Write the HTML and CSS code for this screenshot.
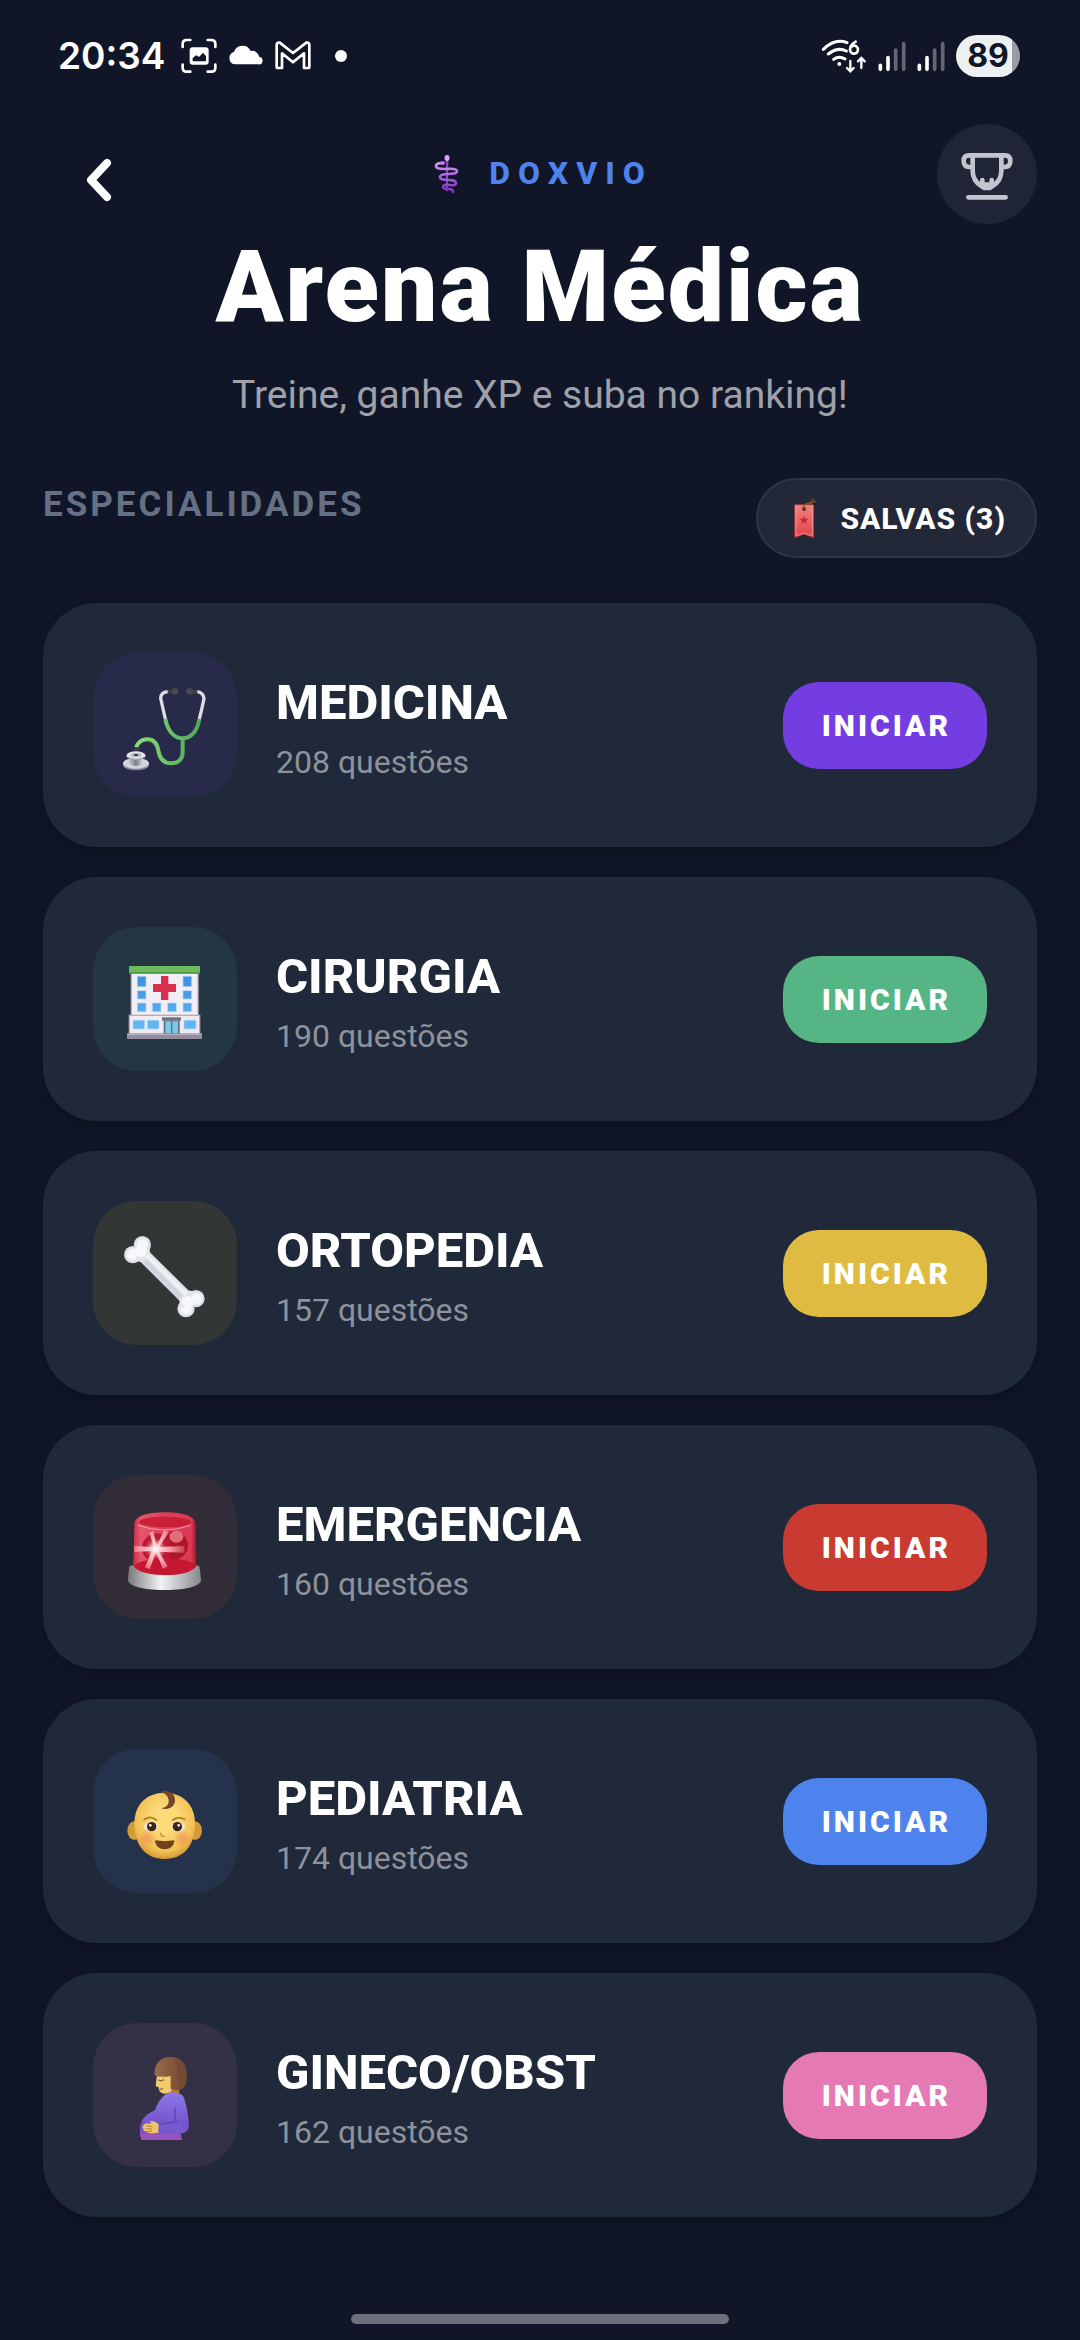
FILE: index.html
```html
<!DOCTYPE html>
<html lang="pt-BR">
	<head>
		<title>Arena Médica</title>
		<meta charset="UTF-8">
		<meta name="viewport" content="width=device-width, initial-scale=1">
		<link rel="stylesheet" href="styles.css">
	</head>
	<body>
		<div class="status-bar">
			<div class="status-left">
				<span class="clock">20:34</span>
				<svg class="status-icon" viewBox="421 55 108 108">
					<path d="M426 82v-9q0-12 12-12h11M501 61h11q12 0 12 12v9M524 135v9q0 12-12 12h-11M449 156h-11q-12 0-12-12v-9" fill="none" stroke="#fff" stroke-width="8" stroke-linecap="round"/>
					<rect x="447" y="83" width="57" height="52" rx="9" fill="#fff"/>
					<path d="M456 125v-10l11-8 8 5 12-13 9 11v15z" fill="#101628"/>
				</svg>
				<svg class="status-icon" viewBox="562 55 108 108">
					<path d="M582 134a19 19 0 0 1-2-37 27 27 0 0 1 50-3 22 22 0 0 1 26 18 11 11 0 0 1-3 22z" fill="#fff"/>
				</svg>
				<svg class="status-icon" viewBox="704 55 108 108">
					<path d="M709 77q0-10 9-8l40 31 40-31q9-2 9 8v64q0 4-4 4h-12V101l-33 27-33-27v44h-12q-4 0-4-4z" fill="none" stroke="#fff" stroke-width="8" stroke-linejoin="round"/>
				</svg>
				<span class="status-dot"></span>
			</div>
			<div class="status-right">
				<svg class="wifi-icon" viewBox="66 56 138 102">
					<g fill="none" stroke="#fff" stroke-width="9" stroke-linecap="round">
						<path d="M73 87q35-34 71-20M88 101q28-22 54-9M104 117q16-12 34-1"/>
						<path d="M170 64q-17 10-17 24a12 12 0 1 0 3-8" stroke-width="8"/>
						<path d="M154 122v30M144 143l10 10 10-10M187 143v-28M177 123l10-10 10 10" stroke-width="7"/>
					</g>
					<circle cx="121" cy="131" r="6" fill="#fff"/>
				</svg>
				<svg class="signal-icon" viewBox="229 61 84 93">
					<g stroke="#fff" stroke-width="11" stroke-linecap="round">
						<path d="M236 134v12M259 111v35"/>
						<path d="M282 88v58M306 69v77" opacity=".35"/>
					</g>
				</svg>
				<svg class="signal-icon" viewBox="229 61 84 93">
					<g stroke="#fff" stroke-width="11" stroke-linecap="round">
						<path d="M236 134v12M259 111v35"/>
						<path d="M282 88v58M306 69v77" opacity=".35"/>
					</g>
				</svg>
				<span class="battery">89</span>
			</div>
		</div>

		<header class="header">
			<button type="button" class="back" aria-label="Voltar">
				<svg viewBox="0 0 30 48"><path d="M23 7 7 24l16 17" fill="none" stroke="#fff" stroke-width="8" stroke-linecap="round" stroke-linejoin="round"/></svg>
			</button>
			<div class="heading">
				<p class="brand">
					<svg viewBox="0 0 40 40">
						<defs>
							<linearGradient id="brandGrad" x1="0" y1="0" x2="0" y2="1">
								<stop offset="0" stop-color="#d79af0"/>
								<stop offset=".5" stop-color="#a35fe0"/>
								<stop offset="1" stop-color="#7631b8"/>
							</linearGradient>
						</defs>
						<path d="M18.600 5h2.800l-.6 33h-1.600z" fill="#8c45c9"/>
						<ellipse cx="20" cy="5" rx="2.500" ry="3" fill="#dca4f2"/>
						<path d="M15 10q-6 0-6 3 0 3 8 3 13-1 13 2 0 3-8 3-9 0-9 3 0 3 8 3 8 0 8 3 0 3-6 2-7-1-7 2 0 2 6 2 4 0 4 3" fill="none" stroke="url(#brandGrad)" stroke-width="2.700" stroke-linecap="round"/>
						<path d="m12 11 3-3 3 1-1 3z" fill="#c684ea"/>
					</svg>
					<span>DOXVIO</span>
				</p>
				<h1>Arena Médica</h1>
				<p class="subtitle">Treine, ganhe XP e suba no ranking!</p>
			</div>
			<button type="button" class="trophy" aria-label="Ranking">
				<svg viewBox="891 42 300 300" fill="none" stroke="#c3c5ce" stroke-width="14" stroke-linecap="round" stroke-linejoin="round">
					<path d="M998 136h86v46c0 22-10 36-26 46l-8 6h-18l-8-6c-16-10-26-24-26-46z"/>
					<path d="M998 136h-11q-16 0-16 17t16 18h11M1084 136h11q16 0 16 17t-16 18h-11"/>
					<path d="M1027 210v14h28v-14M985 262h112"/>
				</svg>
			</button>
		</header>

		<main class="content">
			<div class="section-head">
				<h2>ESPECIALIDADES</h2>
				<button type="button" class="saved">
					<svg viewBox="456 1162 84 126">
						<defs>
							<linearGradient id="markGrad" x1="0" y1="0" x2="0" y2="1">
								<stop offset="0" stop-color="#f08480"/>
								<stop offset="1" stop-color="#df3f49"/>
							</linearGradient>
						</defs>
						<path d="M470 1188q0-3 3-3h51q3 0 3 3v96l-29-10-28 10z" fill="url(#markGrad)" stroke="#b62f3b" stroke-width="2"/>
						<path d="M474 1188v90l24-8 25 8v-90" fill="none" stroke="#ffaaa6" stroke-width="2"/>
						<path d="m498 1219 4 8 9 1-7 6 2 9-8-5-8 5 2-9-7-6 9-1z" fill="#c92843"/>
						<circle cx="498" cy="1198" r="6" fill="#53231d"/>
						<path d="M497 1200v-15q12-2 22-5 10-3 14-6M503 1183q18-2 23-16" fill="none" stroke="#845022" stroke-width="4"/>
					</svg>
					SALVAS (3)
				</button>
			</div>

			<ul class="cards">
				<li class="card medicina">
					<div class="tile">
						<svg viewBox="39 39 432 432">
							<defs>
								<linearGradient id="tubeGrad" x1="0" y1="0" x2="1" y2="0">
									<stop offset="0" stop-color="#8bdc75"/>
									<stop offset="1" stop-color="#4fa85a"/>
								</linearGradient>
								<linearGradient id="steelGrad" x1="0" y1="0" x2="1" y2="0">
									<stop offset="0" stop-color="#c5c8d0"/>
									<stop offset=".5" stop-color="#787c89"/>
									<stop offset="1" stop-color="#d9dce4"/>
								</linearGradient>
							</defs>
							<path d="M256 237c8 38 28 58 52 58s44-20 50-58M308 295v42c0 22-14 33-35 33-27 0-35-20-38-38-4-24-14-34-33-34-18 0-32 12-34 28" fill="none" stroke="url(#tubeGrad)" stroke-width="12"/>
							<path d="M256 237q-10-44-14-62 0-18 22-20M358 237q11-44 14-62-2-17-20-20" fill="none" stroke="#dcdde5" stroke-width="10"/>
							<path d="M263 155h12M339 155h12M168 321v12" stroke="#3d3d43" stroke-width="12"/>
							<circle cx="285" cy="154" r="10" fill="#4a4a50"/>
							<circle cx="329" cy="154" r="10" fill="#4a4a50"/>
							<ellipse cx="168" cy="374" rx="39" ry="17" fill="#8b8f9c"/>
							<ellipse cx="168" cy="370" rx="39" ry="16" fill="#d1d4dd"/>
							<path d="M147 350h42v21q-21 14-42 0z" fill="url(#steelGrad)"/>
							<ellipse cx="168" cy="348" rx="29" ry="12" fill="#a3a7b2"/>
							<ellipse cx="168" cy="345" rx="28" ry="11" fill="#e3e5eb"/>
							<ellipse cx="168" cy="345" rx="16" ry="6" fill="#b4b7c0"/>
							<ellipse cx="168" cy="345" rx="7" ry="3" fill="#36373d"/>
						</svg>
					</div>
					<div class="info">
						<h3>MEDICINA</h3>
						<p>208 questões</p>
					</div>
					<button type="button" class="start">INICIAR</button>
				</li>
				<li class="card cirurgia">
					<div class="tile">
						<svg viewBox="39 39 432 432">
							<defs>
								<linearGradient id="winGrad" x1="0" y1="0" x2="0" y2="1">
									<stop offset="0" stop-color="#3e8de0"/>
									<stop offset="1" stop-color="#63b9f4"/>
								</linearGradient>
							</defs>
							<rect x="154" y="172" width="200" height="136" fill="#f1eff5" stroke="#b9b3bf" stroke-width="4"/>
							<rect x="147" y="156" width="213" height="22" fill="#6cba5c"/>
							<path d="M147 175h213v4H147z" fill="#488f43"/>
							<rect x="148" y="304" width="211" height="56" fill="#eeebf2" stroke="#b1aab8" stroke-width="4"/>
							<rect x="141" y="359" width="225" height="16" fill="#928c9e"/>
							<path d="M141 359h225v4H141z" fill="#b5afbe"/>
							<path d="M243 186h22v24h23v24h-23v24h-22v-24h-24v-24h24z" fill="#d9304f"/>
							<path d="M172 187h26v31h-26zM309 187h26v31h-26zM172 230h26v25h-26zM309 230h26v25h-26zM172 267h26v26h-26zM217 267h26v26h-26zM263 267h26v26h-26zM309 267h26v26h-26zM159 319h35v26h-35zM202 319h35v26h-35zM312 319h36v26h-36z" fill="url(#winGrad)" stroke="#b9d9f3" stroke-width="2"/>
							<rect x="251" y="319" width="48" height="40" fill="#5f6c84"/>
							<path d="M256 322h17v36h-17zM277 322h17v36h-17z" fill="#79cbe6"/>
							<rect x="246" y="310" width="57" height="10" fill="#747083"/>
						</svg>
					</div>
					<div class="info">
						<h3>CIRURGIA</h3>
						<p>190 questões</p>
					</div>
					<button type="button" class="start">INICIAR</button>
				</li>
				<li class="card ortopedia">
					<div class="tile">
						<svg viewBox="39 39 432 432">
							<defs>
								<radialGradient id="knobGrad">
									<stop offset=".5" stop-color="#f7f8fb"/>
									<stop offset="1" stop-color="#d4d5de"/>
								</radialGradient>
							</defs>
							<g fill="url(#knobGrad)">
								<circle cx="187" cy="170" r="26"/>
								<circle cx="158" cy="200" r="26"/>
								<circle cx="348" cy="332" r="26"/>
								<circle cx="318" cy="362" r="26"/>
							</g>
							<path d="m180 180 31-3q-4 10 0 17l114 113q8 4 20 1l-27 52-20-4q4-13-2-21L182 222q-8-4-18 1z" fill="#e3e4eb"/>
							<path d="m187 225 110 110 13-13-110-110z" fill="#d3d4de"/>
							<path d="m196 207 118 118 9-9-118-118z" fill="#f0f1f5"/>
							<circle cx="182" cy="190" r="18" fill="#f7f8fb"/>
							<circle cx="324" cy="342" r="18" fill="#f7f8fb"/>
						</svg>
					</div>
					<div class="info">
						<h3>ORTOPEDIA</h3>
						<p>157 questões</p>
					</div>
					<button type="button" class="start">INICIAR</button>
				</li>
				<li class="card emergencia">
					<div class="tile">
						<svg viewBox="39 39 432 432">
							<defs>
								<linearGradient id="baseGrad" x1="0" y1="0" x2="1" y2="0">
									<stop offset="0" stop-color="#777a7d"/>
									<stop offset=".45" stop-color="#f2f3f4"/>
									<stop offset="1" stop-color="#85888b"/>
								</linearGradient>
								<linearGradient id="domeGrad" x1="0" y1="0" x2="1" y2="0">
									<stop offset="0" stop-color="#c92f47"/>
									<stop offset=".12" stop-color="#e8566b"/>
									<stop offset=".5" stop-color="#dc3f56"/>
									<stop offset=".92" stop-color="#d93a52"/>
									<stop offset="1" stop-color="#a90d27"/>
								</linearGradient>
								<radialGradient id="glow">
									<stop offset="0" stop-color="#fff"/>
									<stop offset=".35" stop-color="#ffdede" stop-opacity=".9"/>
									<stop offset="1" stop-color="#ff8c96" stop-opacity="0"/>
								</radialGradient>
								<radialGradient id="rayGrad" gradientUnits="userSpaceOnUse" cx="227" cy="260" r="92">
									<stop offset="0" stop-color="#fff"/>
									<stop offset=".5" stop-color="#f9a5ae" stop-opacity=".9"/>
									<stop offset="1" stop-color="#f08a96" stop-opacity=".3"/>
								</radialGradient>
							</defs>
							<path d="M148 313q-3 22-4 44c9 20 60 27 110 27s100-7 109-27q-1-22-5-44c-20-13-185-13-210 0z" fill="url(#baseGrad)"/>
							<path d="M163 187c0-24 36-36 92-36s92 12 92 36l2 125c-11 20-50 27-94 27s-86-8-95-27z" fill="url(#domeGrad)"/>
							<path d="M161 310c28-24 150-30 187-2-10 23-46 31-93 31s-84-9-94-29z" fill="#c51731"/>
							<ellipse cx="255" cy="180" rx="78" ry="16" fill="#c92038"/>
							<path d="M173 190q80 28 159 0" fill="none" stroke="#f3a1ad" stroke-width="3"/>
							<circle cx="282" cy="250" r="42" fill="#b0152b"/>
							<circle cx="230" cy="258" r="44" fill="#bd1b35"/>
							<ellipse cx="289" cy="224" rx="21" ry="18" fill="#e26e79"/>
							<path d="m223 260-15-48 12-5 10 47 22-50 15 6-30 45 76-3v20l-76-3 26 44-14 7-21-49-19 51-14-6 20-49-52 3v-18l52 3z" fill="url(#rayGrad)"/>
							<circle cx="227" cy="260" r="32" fill="url(#glow)"/>
						</svg>
					</div>
					<div class="info">
						<h3>EMERGENCIA</h3>
						<p>160 questões</p>
					</div>
					<button type="button" class="start">INICIAR</button>
				</li>
				<li class="card pediatria">
					<div class="tile">
						<svg viewBox="39 39 432 432">
							<defs>
								<radialGradient id="faceGrad" cx=".5" cy=".4" r=".6">
									<stop offset=".3" stop-color="#fbdc79"/>
									<stop offset=".8" stop-color="#f2c055"/>
									<stop offset="1" stop-color="#d79a31"/>
								</radialGradient>
								<radialGradient id="cheek">
									<stop offset="0" stop-color="#f2905a" stop-opacity=".8"/>
									<stop offset="1" stop-color="#f2905a" stop-opacity="0"/>
								</radialGradient>
							</defs>
							<ellipse cx="163" cy="284" rx="21" ry="28" fill="#d39a38"/>
							<ellipse cx="345" cy="284" rx="21" ry="28" fill="#d39a38"/>
							<path d="M254 170c54 0 91 36 91 92 0 70-36 107-91 107s-91-37-91-107c0-56 37-92 91-92z" fill="url(#faceGrad)"/>
							<circle cx="201" cy="308" r="27" fill="url(#cheek)"/>
							<circle cx="308" cy="308" r="27" fill="url(#cheek)"/>
							<path d="M241 169c15-9 44-5 44 24 0 20-19 31-42 24 18-3 23-12 23-22 0-14-10-23-25-26z" fill="#75452c"/>
							<path d="M193 250q18-12 36 2M278 252q18-12 36-2" fill="none" stroke="#bc812d" stroke-width="6" stroke-linecap="round"/>
							<ellipse cx="213" cy="272" rx="21" ry="15" fill="#efe4d1"/>
							<ellipse cx="294" cy="272" rx="21" ry="15" fill="#efe4d1"/>
							<circle cx="215" cy="272" r="14" fill="#3d2319"/>
							<circle cx="292" cy="272" r="14" fill="#3d2319"/>
							<circle cx="211" cy="268" r="4" fill="#fff"/>
							<circle cx="296" cy="268" r="4" fill="#fff"/>
							<path d="m242 292 3 8q4 2 8 0" fill="none" stroke="#c18332" stroke-width="4" stroke-linecap="round"/>
							<path d="M225 313q29 5 58 0c-1 36-57 36-58 0z" fill="#70421a"/>
						</svg>
					</div>
					<div class="info">
						<h3>PEDIATRIA</h3>
						<p>174 questões</p>
					</div>
					<button type="button" class="start">INICIAR</button>
				</li>
				<li class="card gineco">
					<div class="tile">
						<svg viewBox="39 39 432 432">
							<defs>
								<linearGradient id="dressGrad" x1="0" y1="0" x2="0" y2="1">
									<stop offset="0" stop-color="#8f78e6"/>
									<stop offset=".75" stop-color="#6e50c9"/>
									<stop offset="1" stop-color="#a655bd"/>
								</linearGradient>
								<linearGradient id="hairGrad" x1="0" y1="0" x2="1" y2="0">
									<stop offset="0" stop-color="#9a6a4b"/>
									<stop offset="1" stop-color="#704631"/>
								</linearGradient>
							</defs>
							<path d="M270 222h28v30h-35z" fill="#b8772f"/>
							<path d="M234 189q-6 16-6 30l-1 10 8 2q2 19 18 20 19 0 24-14v-48z" fill="#f2ca6b"/>
							<path d="M224 196c-3-32 15-55 48-55 36 0 51 29 49 60-2 28-7 36-29 39-9 0-15 0-20-3v-39q-26 6-48-2z" fill="url(#hairGrad)"/>
							<path d="M286 148q20 24 12 80" fill="none" stroke="#623a29" stroke-width="3" opacity=".6"/>
							<path d="M235 210q8 6 17-1M239 237q5 3 10-2" fill="none" stroke="#684020" stroke-width="3"/>
							<path d="M264 248q30-4 45 10c12 24 16 65 18 88 1 14-9 23-26 25l5 19H184c-8-26-6-54 12-71 11-11 20-13 29-18 8-23 19-41 39-53z" fill="url(#dressGrad)"/>
							<path d="M287 292q-6 24 2 44l-53 8" fill="none" stroke="#543bab" stroke-width="4" opacity=".8"/>
							<path d="M236 371q38 4 65-1l5 20H184l-3-17z" fill="#9954bd"/>
							<path d="M236 344q40-2 53-8l34 12q0 21-26 22-32 4-61 0z" fill="#7459cf"/>
							<path d="M236 342q-13-10-26-10l4 9q-22-4-22 4-8 5-2 11 0 8 8 8 6 8 25 6l12-2z" fill="#f0c36a"/>
							<path d="m197 347 20 3M195 356l21 1M201 364h15" stroke="#a5682e" stroke-width="2"/>
						</svg>
					</div>
					<div class="info">
						<h3>GINECO/OBST</h3>
						<p>162 questões</p>
					</div>
					<button type="button" class="start">INICIAR</button>
				</li>
			</ul>
		</main>

		<div class="home-bar"></div>
	</body>
</html>
```

FILE: styles.css
```css
* {
	box-sizing: border-box;
}

body {
	margin: 0;
	min-height: 100vh;
	display: flex;
	flex-direction: column;
	background-color: #101628;
	color: #fff;
	font-family: Roboto, "Liberation Sans", sans-serif;
}

h1, h2, h3, p, ul {
	margin: 0;
	padding: 0;
}

button {
	border: none;
	padding: 0;
	color: inherit;
	font-family: inherit;
	cursor: pointer;
}

svg {
	display: block;
	flex-shrink: 0;
}

/* status bar */
.status-bar {
	display: flex;
	justify-content: space-between;
	align-items: center;
	height: 112px;
	padding: 0 60px 0 58px;
}

.status-left, .status-right {
	display: flex;
	align-items: center;
	gap: 11px;
}

.clock {
	margin-right: 5px;
	font-family: Inter, Roboto, sans-serif;
	font-size: 37px;
	font-weight: 600;
	line-height: 44px;
}

.status-icon {
	width: 36px;
	height: 36px;
}

.status-dot {
	width: 12px;
	height: 12px;
	margin-left: 13px;
	border-radius: 50%;
	background-color: #fff;
}

.wifi-icon {
	width: 46px;
	height: 34px;
}

.signal-icon {
	width: 28px;
	height: 31px;
}

.battery {
	width: 64px;
	border-radius: 21px;
	background: linear-gradient(to right, #eeeff1 88%, #9a9da5 88%);
	color: #101628;
	font-family: Inter, Roboto, sans-serif;
	font-size: 32px;
	font-weight: 700;
	line-height: 42px;
	text-align: center;
}

/* header */
.header {
	display: grid;
	grid-template-columns: 112px 1fr 112px;
	align-items: start;
	padding: 12px 43px 0;
}

.back {
	display: flex;
	align-items: center;
	justify-content: center;
	height: 112px;
	background: none;
}

.back svg {
	width: 30px;
	height: 48px;
}

.heading {
	padding-top: 29px;
	text-align: center;
}

.brand {
	display: flex;
	justify-content: center;
	gap: 22px;
	color: #4f83ec;
	font-size: 32px;
	font-weight: 800;
	line-height: 40px;
	letter-spacing: 8px;
}

.brand svg {
	width: 40px;
	height: 40px;
}

h1 {
	margin-top: 36px;
	font-size: 100px;
	font-weight: 900;
	line-height: 116px;
	letter-spacing: 2px;
	white-space: nowrap;
}

.subtitle {
	margin-top: 27px;
	color: #9fa1a9;
	font-size: 39px;
	line-height: 46px;
}

.trophy {
	justify-self: end;
	width: 100px;
	height: 100px;
	border-radius: 50%;
	background-color: #202536;
}

.trophy svg {
	width: 100px;
	height: 100px;
}

/* specialties */
.content {
	padding: 60px 43px 0;
}

.section-head {
	display: flex;
	justify-content: space-between;
	align-items: flex-start;
}

h2 {
	padding-top: 7px;
	color: #667085;
	font-size: 35px;
	font-weight: 700;
	line-height: 40px;
	letter-spacing: 3px;
}

.saved {
	display: flex;
	align-items: center;
	gap: 22px;
	height: 80px;
	padding: 0 29px 0 32px;
	border: 2px solid #303545;
	border-radius: 40px;
	background-color: #232838;
	font-size: 30px;
	font-weight: 800;
	letter-spacing: 1px;
}

.saved svg {
	width: 28px;
	height: 42px;
}

.cards {
	display: flex;
	flex-direction: column;
	gap: 30px;
	margin-top: 45px;
	list-style: none;
}

.card {
	display: flex;
	align-items: center;
	padding: 50px;
	border-radius: 54px;
	background-color: #202939;
	box-shadow: 0 6px 12px rgba(0, 0, 0, 0.2);
}

.tile {
	border-radius: 44px;
}

.tile svg {
	width: 144px;
	height: 144px;
}

.info {
	flex: 1;
	padding-left: 39px;
}

h3 {
	font-size: 49px;
	font-weight: 800;
	line-height: 70px;
}

.info p {
	margin-top: 4px;
	color: #8d929b;
	font-size: 32px;
	line-height: 40px;
}

.start {
	padding: 0 36px 0 39px;
	border-radius: 36px;
	font-size: 30px;
	font-weight: 900;
	line-height: 87px;
	letter-spacing: 3px;
}

.medicina .tile { background-color: #282a49; }
.medicina .start { background-color: #743de1; }
.cirurgia .tile { background-color: #243642; }
.cirurgia .start { background-color: #56b585; }
.ortopedia .tile { background-color: #323735; }
.ortopedia .start { background-color: #dfbc41; }
.emergencia .tile { background-color: #322b38; }
.emergencia .start { background-color: #c93a30; }
.pediatria .tile { background-color: #24324b; }
.pediatria .start { background-color: #4e82ed; }
.gineco .tile { background-color: #343146; }
.gineco .start { background-color: #e579b4; }

.home-bar {
	width: 35%;
	height: 10px;
	margin: auto auto 16px;
	border-radius: 5px;
	background-color: #6c707c;
}
```
